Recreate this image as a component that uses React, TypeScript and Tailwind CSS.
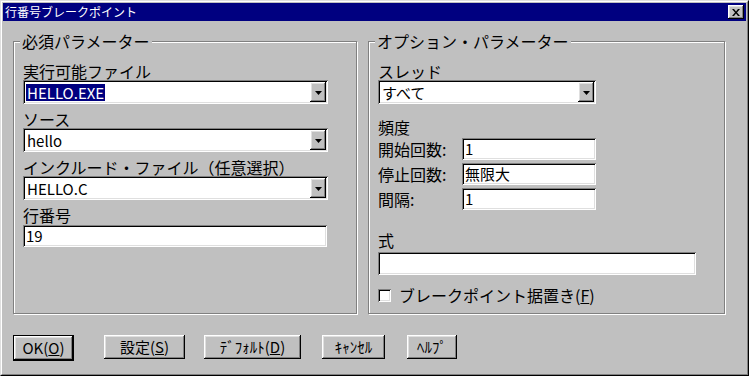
import React from 'react';

const sunken =
  'shadow-[inset_1px_1px_0_#808080,inset_-1px_-1px_0_#ffffff,inset_2px_2px_0_#000000,inset_-2px_-2px_0_#dfdfdf]';
const raised =
  'shadow-[inset_-1px_-1px_0_#000000,inset_1px_1px_0_#ffffff,inset_-2px_-2px_0_#808080,inset_2px_2px_0_#dfdfdf]';
const etched = 'border border-[#808080] shadow-[inset_1px_1px_0_#ffffff,1px_1px_0_#ffffff]';

function Arrow() {
  return (
    <div className={`flex h-[20px] w-[16px] items-center justify-center bg-[#c0c0c0] ${raised}`}>
      <svg width="7" height="4" viewBox="0 0 7 4" className="mt-[1px]">
        <path d="M0 0h7L3.5 4z" fill="#000" />
      </svg>
    </div>
  );
}

function Combo({ value, className, selected }: { value: string; className: string; selected?: boolean }) {
  return (
    <div className={`flex h-[24px] items-center bg-white p-[2px] ${sunken} ${className}`}>
      <div className="flex flex-1 items-center pl-[1px]">
        <span
          className={`px-[1px] text-[15px] leading-[17px] ${selected ? 'bg-[#000080] text-white' : 'text-black'}`}
        >
          {value}
        </span>
      </div>
      <Arrow />
    </div>
  );
}

function Edit({ value, className }: { value?: string; className: string }) {
  return (
    <div className={`flex items-center bg-white pl-[3px] text-black ${sunken} ${className}`}>
      <span className="text-[15px] leading-[18px]">{value}</span>
    </div>
  );
}

function Label({ children, className = '' }: { children: React.ReactNode; className?: string }) {
  return <div className={`h-[18px] leading-[18px] ${className}`}>{children}</div>;
}

function Group({ title, className, children }: { title: string; className: string; children: React.ReactNode }) {
  return (
    <div className={`relative h-[273px] ${etched} ${className}`}>
      <span className="absolute -top-[10px] left-[6px] bg-[#c0c0c0] px-[2px] leading-[18px]">{title}</span>
      {children}
    </div>
  );
}

function Button({ children, className, isDefault }: { children: React.ReactNode; className: string; isDefault?: boolean }) {
  return (
    <div className={`${isDefault ? 'border border-black' : ''} ${className}`}>
      <div className={`flex h-[24px] items-center justify-center bg-[#c0c0c0] text-[15px] leading-[18px] ${raised}`}>
        {children}
      </div>
    </div>
  );
}

export default function App() {
  return (
    <div className="h-[376px] w-[749px] border border-[#dfdfdf] border-r-black border-b-black bg-[#c0c0c0] font-['Noto_Sans_CJK_JP',sans-serif] text-[16px] text-black">
      <div className="h-full border border-white border-r-[#808080] border-b-[#808080] p-[1px]">
        <div className="flex h-[18px] items-center justify-between bg-[#000080] pl-[2px] pr-[2px]">
          <span className="text-[12px] leading-[18px] text-white">行番号ブレークポイント</span>
          <div className={`flex h-[14px] w-[16px] items-center justify-center bg-[#c0c0c0] ${raised}`}>
            <svg width="8" height="7" viewBox="0 0 8 7">
              <path d="M0 0h2l2 2.5L6 0h2L5 3.5 8 7H6L4 4.5 2 7H0l3-3.5z" fill="#000" />
            </svg>
          </div>
        </div>

        <div className="flex gap-[11px] pl-[10px] pt-[20px]">
          <Group title="必須パラメーター" className="w-[344px]">
            <div className="flex flex-col pl-[9px] pt-[20px]">
              <Label>実行可能ファイル</Label>
              <Combo value="HELLO.EXE" className="w-[305px]" selected />
              <Label className="mt-[6px]">ソース</Label>
              <Combo value="hello" className="w-[305px]" />
              <Label className="mt-[6px]">インクルード・ファイル（任意選択）</Label>
              <Combo value="HELLO.C" className="w-[305px]" />
              <Label className="mt-[6px]">行番号</Label>
              <Edit value="19" className="mt-[1px] h-[22px] w-[304px]" />
            </div>
          </Group>

          <Group title="オプション・パラメーター" className="w-[357px]">
            <div className="flex flex-col pl-[9px] pt-[20px]">
              <Label>スレッド</Label>
              <Combo value="すべて" className="w-[218px]" />
              <Label className="mt-[14px]">頻度</Label>
              <div className="mt-[2px] flex flex-col gap-[3px]">
                <div className="flex items-center">
                  <span className="w-[84px] leading-[18px]">開始回数:</span>
                  <Edit value="1" className="h-[22px] w-[134px]" />
                </div>
                <div className="flex items-center">
                  <span className="w-[84px] leading-[18px]">停止回数:</span>
                  <Edit value="無限大" className="h-[22px] w-[134px]" />
                </div>
                <div className="flex items-center">
                  <span className="w-[84px] leading-[18px]">間隔:</span>
                  <Edit value="1" className="h-[22px] w-[134px]" />
                </div>
              </div>
              <Label className="mt-[21px]">式</Label>
              <Edit className="mt-[3px] h-[23px] w-[318px]" />
              <div className="mt-[11px] flex items-center gap-[8px]">
                <div className={`h-[13px] w-[13px] bg-white ${sunken}`} />
                <span className="leading-[18px]">
                  ブレークポイント据置き(<span className="underline">F</span>)
                </span>
              </div>
            </div>
          </Group>
        </div>

        <div className="mt-[21px] flex items-start pl-[10px]">
          <Button isDefault className="w-[61px]">
            OK(<span className="underline">O</span>)
          </Button>
          <Button className="ml-[30px] w-[81px]">
            設定(<span className="underline">S</span>)
          </Button>
          <Button className="ml-[19px] w-[97px]">
            ﾃﾞﾌｫﾙﾄ(<span className="underline">D</span>)
          </Button>
          <Button className="ml-[21px] w-[63px]">ｷｬﾝｾﾙ</Button>
          <Button className="ml-[22px] w-[50px]">ﾍﾙﾌﾟ</Button>
        </div>
      </div>
    </div>
  );
}
